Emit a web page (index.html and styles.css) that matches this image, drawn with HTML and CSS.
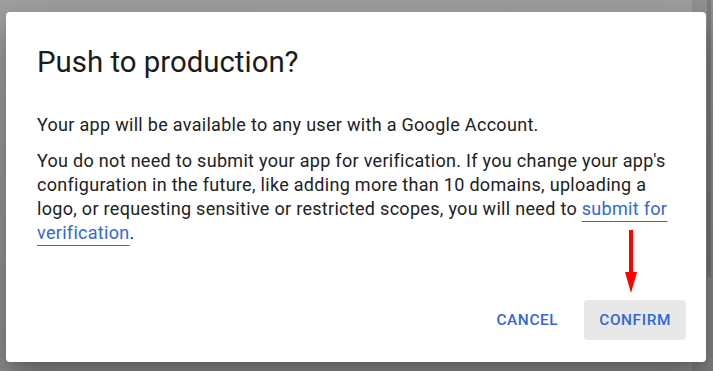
FILE: index.html
```html
<!DOCTYPE html>
<html lang="en">
<head>
    <meta charset="UTF-8">
    <meta name="viewport" content="width=device-width, initial-scale=1.0">
    <title>Push to production?</title>
    <link rel="stylesheet" href="styles.css">
</head>
<body>
    <div class="scrollbar"><div class="thumb"></div></div>

    <div class="dialog">
        <h1 class="dialog-title">Push to production?</h1>
        <div class="dialog-content">
            <p>Your app will be available to any user with a Google Account.</p>
            <p>You do not need to submit your app for verification. If you change your app's configuration in the future, like adding more than 10 domains, uploading a logo, or requesting sensitive or restricted scopes, you will need to <a href="#">submit for verification</a>.</p>
        </div>
        <div class="dialog-actions">
            <button class="btn">CANCEL</button>
            <button class="btn btn-focus">CONFIRM</button>
        </div>
    </div>

    <!-- red annotation arrow -->
    <svg class="arrow" width="16" height="66" viewBox="0 0 16 66">
        <line x1="8" y1="2" x2="8" y2="48" stroke="#ff0000" stroke-width="4"/>
        <polygon points="2,44 14,44 8,65" fill="#ff0000"/>
    </svg>
</body>
</html>
```

FILE: styles.css
```css
/* styles.css */
body {
    margin: 0;
    padding: 12px 7px 0 6px;
    height: 371px;
    box-sizing: border-box;
    overflow: hidden;
    position: relative;
    font-family: Roboto, "Liberation Sans", Arial, sans-serif;
    background: linear-gradient(#a2a2a2, #8e8e8e);
}

.scrollbar {
    position: absolute;
    top: 0;
    right: 0;
    width: 21px;
    height: 100%;
    background: rgba(0, 0, 0, 0.09);
}
.scrollbar .thumb {
    margin-left: 15px;
    width: 4px;
    height: 277px;
    background: rgba(0, 0, 0, 0.14);
}

.dialog {
    position: relative;
    width: 700px;
    height: 350px;
    box-sizing: border-box;
    padding: 34px 31px 22px 31px;
    background: #fff;
    border-radius: 4px;
    box-shadow: 0 11px 15px -7px rgba(0, 0, 0, 0.2), 0 24px 38px 3px rgba(0, 0, 0, 0.14), 0 9px 46px 8px rgba(0, 0, 0, 0.12);
    display: flex;
    flex-direction: column;
    color: #202124;
}

.dialog-title {
    margin: 0;
    font-size: 29.4px;
    line-height: 32px;
    font-weight: 400;
    color: #1b1b1b;
}

.dialog-content {
    margin-top: 35px;
    font-size: 18px;
    line-height: 24.2px;
    letter-spacing: 0.3px;
}
.dialog-content p {
    margin: 0 0 11.4px 0;
}
.dialog-content a {
    color: #3367d6;
    text-decoration: underline;
    text-decoration-thickness: 1px;
    text-underline-offset: 6px;
}

.dialog-actions {
    margin-top: auto;
    margin-right: -11px;
    display: flex;
    justify-content: flex-end;
    gap: 11px;
}

.btn {
    height: 40px;
    padding: 0 15px;
    border: none;
    border-radius: 4px;
    background: transparent;
    font-family: Roboto, "Liberation Sans", Arial, sans-serif;
    font-size: 15.4px;
    font-weight: 500;
    letter-spacing: 0.6px;
    color: #3367d6;
}
.btn-focus {
    background: #e8e8e8;
}

.arrow {
    position: absolute;
    left: 623px;
    top: 228px;
}
```
